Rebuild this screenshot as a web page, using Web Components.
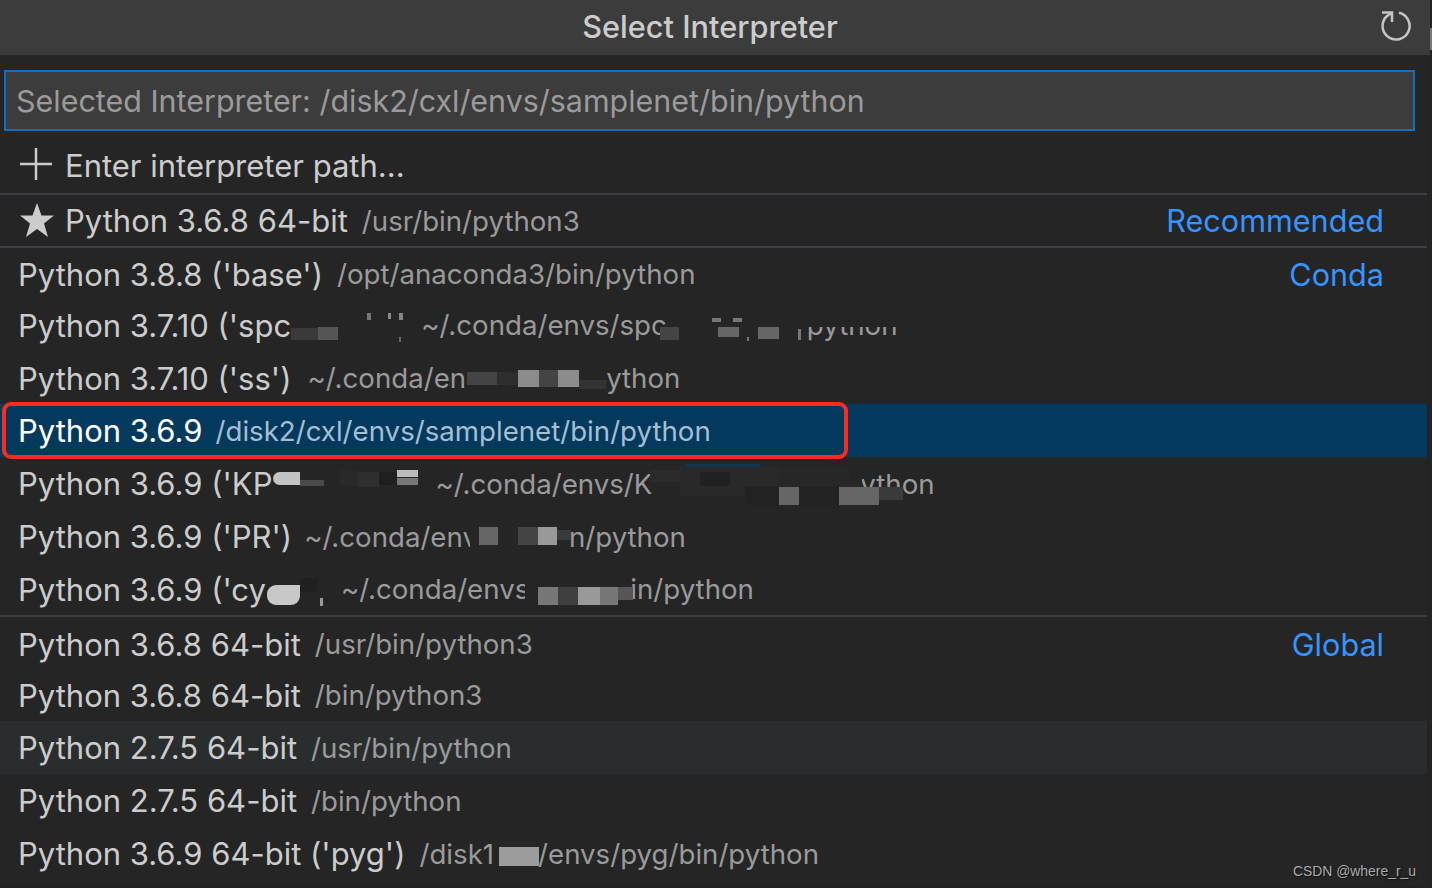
<!DOCTYPE html>
<html lang="en">
  <head>
    <meta charset="UTF-8" />
    <title>Select Interpreter</title>
    <style>
      html, body { margin: 0; height: 100%; background: #232323; overflow: hidden; }
      body { font-family: Inter, "Noto Sans", sans-serif; }
    </style>
  </head>
  <body>
    <quick-pick>
      <span slot="title">Select Interpreter</span>
      <span slot="input">Selected Interpreter: /disk2/cxl/envs/samplenet/bin/python</span>

      <py-row h="56" sep icon="plus" style="padding-bottom: 2px">Enter interpreter path...</py-row>
      <py-row h="53" sep icon="star" detail="/usr/bin/python3" tag="Recommended">Python 3.6.8 64-bit</py-row>
      <py-row h="52" detail="/opt/anaconda3/bin/python" tag="Conda">Python 3.8.8 ('base')</py-row>
      <py-row h="52" gap="130" style="padding-bottom: 2px">Python 3.7.10 ('spc<span slot="detail">~/.conda/envs/spc<text-gap w="140"></text-gap>python</span></py-row>
      <py-row h="52" gap="16"><span>Python 3.7.10 ('ss')</span><span slot="detail">~/.conda/en<text-gap w="140"></text-gap>ython</span></py-row>
      <py-row h="53" selected gap="13" detail="/disk2/cxl/envs/samplenet/bin/python">Python 3.6.9</py-row>
      <py-row h="53" gap="163">Python 3.6.9 ('KP<span slot="detail">~/.conda/envs/K<text-gap w="208"></text-gap>ython</span></py-row>
      <py-row h="53" gap="12">Python 3.6.9 ('PR')<span slot="detail">~/.conda/env<text-gap w="91"></text-gap>n/python</span></py-row>
      <py-row h="54" sep gap="75">Python 3.6.9 ('cy<span slot="detail">~/.conda/envs<text-gap w="101"></text-gap>in/python</span></py-row>
      <py-row h="54" detail="/usr/bin/python3" tag="Global">Python 3.6.8 64-bit</py-row>
      <py-row h="50" detail="/bin/python3" style="padding-bottom: 2px">Python 3.6.8 64-bit</py-row>
      <py-row h="53" hover detail="/usr/bin/python">Python 2.7.5 64-bit</py-row>
      <py-row h="53" detail="/bin/python">Python 2.7.5 64-bit</py-row>
      <py-row h="53">Python 3.6.9 64-bit ('pyg')<span slot="detail">/disk1<text-gap w="44"></text-gap>/envs/pyg/bin/python</span></py-row>

      <mosaic-layer slot="over" cells="
        291 328 27 12 #3a3a3a;318 327 20 13 #555;
        367 313 4 7 #777;388 313 3 6 #888;399 313 4 7 #888;399 337 2 5 #666;
        660 327 19 13 #444;718 327 21 10 #666;758 327 21 12 #666;712 318 9 4 #777;733 318 9 4 #777;747 337 2 4 #777;
        800 310 105 17 #252526;798 329 3 11 #777;
        467 372 30 13 #444;497 372 21 13 #2e2e2e;518 370 21 17 #8c8c8c;539 370 19 17 #444;558 370 21 17 #8c8c8c;579 380 27 9 #333;
        273 472 27 13 #c4c4c4 7px 0 0 7px;300 480 24 6 #4a4a4a;340 470 18 16 #292929;358 472 21 15 #2e2e2e;379 472 18 13 #1f1f1f;397 478 21 7 #777;397 470 21 7 #bbb;
        650 470 30 12 #2a2a2a;680 466 100 30 #292929;700 472 30 14 #212121;780 468 79 18 #272727;745 486 34 19 #222;779 487 20 18 #666;800 487 39 18 #222;839 487 40 18 #666;879 487 24 13 #3a3a3a;850 470 12 12 #252526;
        685 464 75 3 #10374f;
        470 525 9 22 #252526;479 527 19 18 #666;518 527 20 18 #444;538 527 19 18 #999;557 530 14 10 #3a3a3a;
        267 585 33 20 #c8c8c8 9px 0 9px 9px;300 578 18 14 #202020;320 598 3 8 #999;
        525 580 13 25 #252526;538 587 20 18 #777;558 587 20 18 #3f3f3f;578 587 22 18 #999;600 587 18 18 #777;618 587 15 13 #555;
        499 847 40 19 #9c9c9c"></mosaic-layer>
    </quick-pick>

    <script>
      const icons = {
        plus: `<svg viewBox="0 0 32 32" width="32" height="32" style="margin-top: -3px"><path d="M16 0v32M0 16h32" stroke="#ccc" stroke-width="2.500" fill="none"/></svg>`,
        star: `<svg viewBox="0 0 34 34" width="34" height="34" style="margin-right: 11px; margin-top: -2px"><path d="M17 0l4.500 12.500H34l-10 8 4 13.500-11-8-11 8 4-13.500-10-8h12.500z" fill="#ccc"/></svg>`,
      };

      class QuickPick extends HTMLElement {
        constructor() {
          super();
          this.attachShadow({ mode: "open" });
          this.shadowRoot.innerHTML = `
      <style>
        :host { display: block; position: relative; width: 1427px; height: 886px; background: #252526; color: #ccc; }
        header {
          width: 1430px;
          height: 55px;
          background: #3c3c3c;
          display: flex;
          align-items: center;
          justify-content: center;
          padding: 0 10px 3px 0;
          box-sizing: border-box;
          font-size: 30.700px;
          font-weight: 500;
          position: relative;
        }
        header svg { position: absolute; left: 1380px; top: 10px; }
        .thumb { position: absolute; left: 1430px; top: 28px; width: 2px; height: 22px; background: #777; }
        .box { padding: 15px 12px 8px 4px; }
        .input {
          height: 57px;
          border: 2px solid #0e70c0;
          background: #3c3c3c;
          display: flex;
          align-items: center;
          padding-left: 10px;
          font-size: 30.450px;
          color: #9b9b9b;
        }
        .mark {
          position: absolute; left: 1293px; top: 863px;
          font: 13.900px "Liberation Sans", sans-serif;
          color: #aaa;
          text-shadow: 1px 1px 1px #111;
          white-space: nowrap;
        }
      </style>
      <header><slot name="title"></slot>
        <svg width="32" height="32" viewBox="0 0 32 32" fill="none" stroke="#c5c5c5" stroke-width="2.500">
          <path d="M19 2.800A13.500 13.500 0 1 1 6.500 6.500L12 2.600"/><path d="M2 2.600H12V12"/>
        </svg>
      </header>
      <div class="thumb"></div>
      <div class="box"><div class="input"><slot name="input"></slot></div></div>
      <slot></slot>
      <slot name="over"></slot>
      <div class="mark">CSDN @where_r_u</div>
    `;
        }
      }
      customElements.define("quick-pick", QuickPick);

      class PyRow extends HTMLElement {
        constructor() {
          super();
          this.attachShadow({ mode: "open" });
          const icon = icons[this.getAttribute("icon")];
          const detail = this.getAttribute("detail") || "";
          const tag = this.getAttribute("tag") || "";
          const gap = this.getAttribute("gap") || 14;
          this.shadowRoot.innerHTML = `
      <style>
        :host {
          display: flex;
          align-items: center;
          box-sizing: border-box;
          height: ${this.getAttribute("h")}px;
          padding: 0 43px 0 18px;
          font-size: 31px;
          color: #ccc;
          white-space: nowrap;
          position: relative;
        }
        :host([sep]) { border-bottom: 2px solid #3c3c42; }
        :host([icon]) { padding-left: 20px; }
        :host([selected]) { background: #04395e; color: #fff; }
        :host([hover]) { background: #2a2d2e; }
        svg { margin-right: 13px; flex: none; }
        .detail { font-size: 27.650px; margin-left: ${gap}px; color: #9a9a9a; flex: 1; }
        :host([selected]) .detail { color: #a3bfd3; }
        .tag { color: #3794ff; font-size: 30.600px; }
        .ring {
          position: absolute;
          left: 2px; top: -2px; width: 838px; height: 49px;
          border: 4px solid #fb2c1f;
          border-radius: 9px;
        }
      </style>
      ${icon || ""}<span><slot></slot></span>
      <span class="detail"><slot name="detail">${detail}</slot></span>
      <span class="tag">${tag}</span>
      ${this.hasAttribute("selected") ? '<div class="ring"></div>' : ""}
    `;
        }
      }
      customElements.define("py-row", PyRow);

      // 文字の途中にあるモザイク部分の空き
      class TextGap extends HTMLElement {
        constructor() {
          super();
          this.attachShadow({ mode: "open" });
          this.shadowRoot.innerHTML = `
      <style>:host { display: inline-block; width: ${this.getAttribute("w")}px; }</style>
    `;
        }
      }
      customElements.define("text-gap", TextGap);

      // スクリーンショットのぼかしを四角で描く（ページ座標）
      class MosaicLayer extends HTMLElement {
        constructor() {
          super();
          this.attachShadow({ mode: "open" });
          const cells = this.getAttribute("cells")
            .split(";")
            .map((c) => c.trim().split(/\s+/))
            .map(([x, y, w, h, color, ...r]) =>
              `<i style="left:${x}px;top:${y}px;width:${w}px;height:${h}px;background:${color};border-radius:${r.join(" ") || 0}"></i>`)
            .join("");
          this.shadowRoot.innerHTML = `
      <style>
        :host { display: block; position: absolute; left: 0; top: 0; }
        i { position: absolute; display: block; }
      </style>
      ${cells}
    `;
        }
      }
      customElements.define("mosaic-layer", MosaicLayer);
    </script>
  </body>
</html>
